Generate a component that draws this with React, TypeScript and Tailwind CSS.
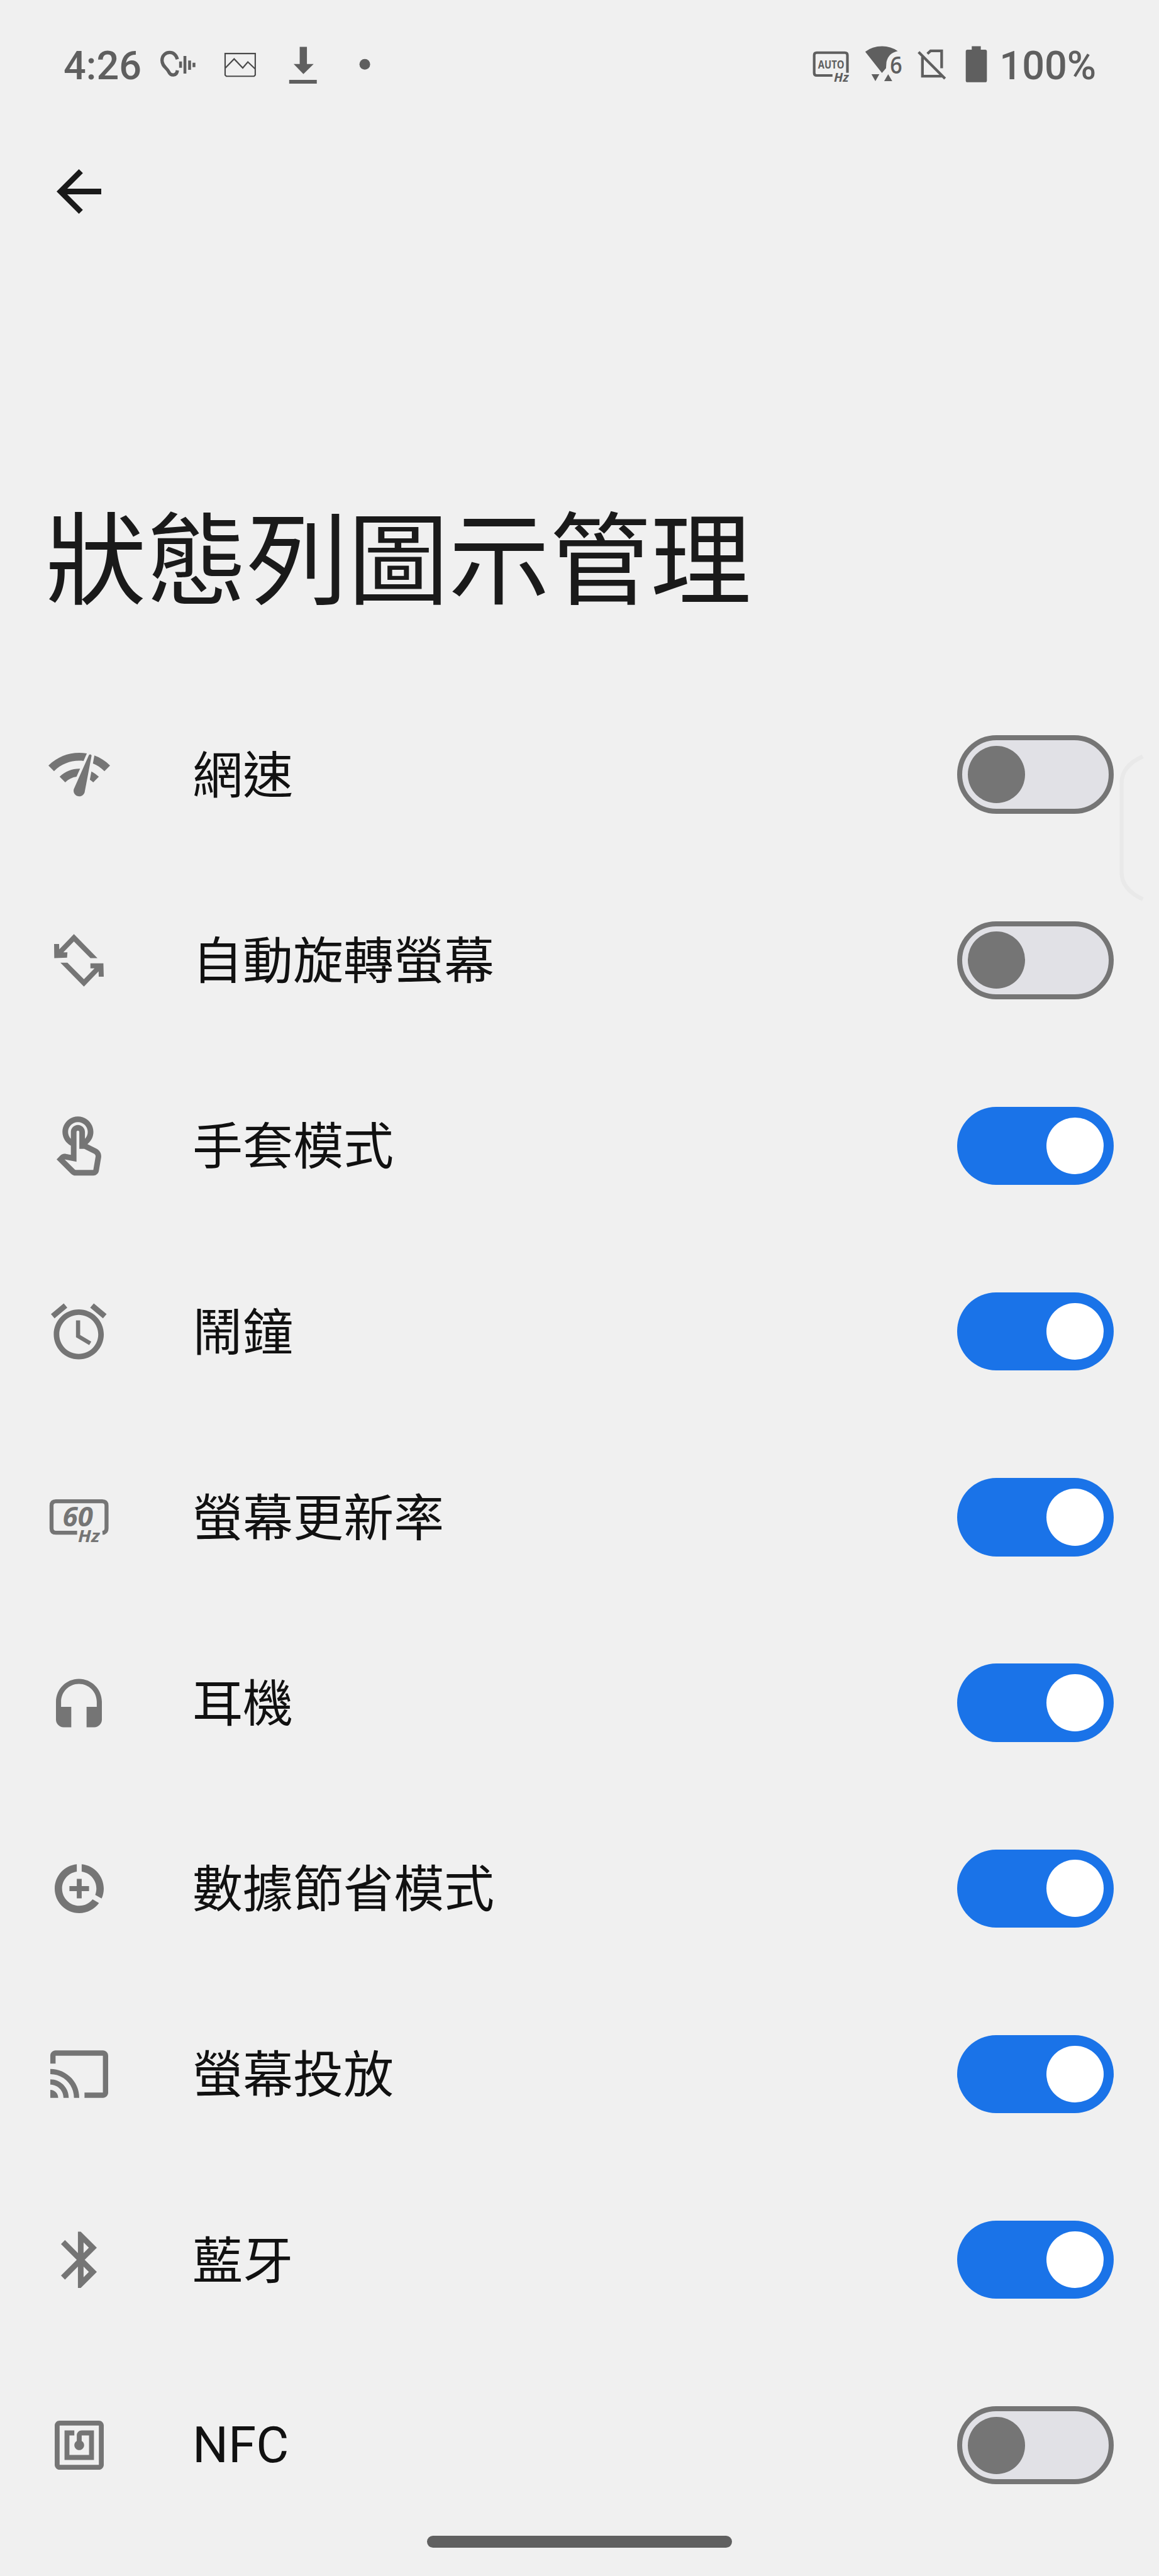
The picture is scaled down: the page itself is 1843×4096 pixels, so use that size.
import { useState } from 'react';
import type { ReactNode } from 'react';

interface IconProps {
  box: string;
  size: string;
  children: ReactNode;
}

interface StatusItem {
  id: string;
  label: string;
  enabled: boolean;
  icon: ReactNode;
}

function Icon({ box, size, children }: IconProps) {
  return (
    <svg viewBox={box} className={`${size} shrink-0 overflow-visible`} fill="currentColor">
      {children}
    </svg>
  );
}

const items: StatusItem[] = [
  {
    id: 'speed',
    label: '網速',
    enabled: false,
    icon: (
      <Icon box="1 4.4 22 15.6" size="w-[98px] h-[71px]">
        <path d="M15.9 5c-.17 0-.32.09-.41.23l-.07.15-5.18 11.65c-.16.29-.26.61-.26.96 0 1.11.9 2.01 2.01 2.01.96 0 1.77-.68 1.96-1.59l.01-.03L16.4 5.5c0-.28-.22-.5-.5-.5zM1 9l2 2c2.88-2.88 6.79-4.08 10.53-3.62l1.19-2.68C9.89 3.84 4.74 5.27 1 9zm20 2l2-2c-1.64-1.64-3.55-2.82-5.59-3.57l-.53 2.82c1.5.62 2.9 1.53 4.12 2.75zm-4 4l2-2c-.8-.8-1.7-1.42-2.66-1.89l-.55 2.92c.42.27.83.59 1.21.97zM5 13l2 2c1.13-1.13 2.56-1.79 4.03-2l1.28-2.88c-2.63-.08-5.3.87-7.31 2.88z" />
      </Icon>
    ),
  },
  {
    id: 'rotate',
    label: '自動旋轉螢幕',
    enabled: false,
    icon: (
      <Icon box="97 1132 268 284" size="w-[79px] h-[84px]">
        <path d="M204 1132L331 1262H293L204 1172L147 1231H169L167 1260L98 1262L97 1186H124L125 1215Z" />
        <path d="M258 1416L131 1287H169L258 1376L315 1317H293V1290H363L365 1362H338L337 1333Z" />
      </Icon>
    ),
  },
  {
    id: 'glove',
    label: '手套模式',
    enabled: true,
    icon: (
      <Icon box="4 1 15.86 21" size="w-[71px] h-[94.5px]">
        <path d="M18.19 12.44l-3.24-1.62c1.29-1 2.12-2.56 2.12-4.32 0-3.03-2.47-5.5-5.5-5.5s-5.5 2.47-5.5 5.5c0 2.13 1.22 3.98 3 4.89v3.26c-2.15-.46-2.02-.44-2.26-.44-.53 0-1.03.21-1.41.59L4 16.22l5.09 5.09c.43.44 1.03.69 1.65.69h6.3c.98 0 1.81-.7 1.97-1.67l.8-4.71c.22-1.3-.43-2.58-1.62-3.18zm-.35 2.85l-.8 4.71h-6.3c-.09 0-.17-.04-.24-.1l-3.68-3.68 4.25.89V6.5c0-.28.22-.5.5-.5s.5.22.5.5v6h1.76l3.46 1.73c.4.2.62.63.55 1.06zM8.07 6.5c0-1.93 1.57-3.5 3.5-3.5s3.5 1.57 3.5 3.5c0 .95-.38 1.81-1 2.44V6.5c0-1.38-1.12-2.5-2.5-2.5s-2.5 1.12-2.5 2.5v2.44c-.62-.63-1-1.49-1-2.44z" />
      </Icon>
    ),
  },
  {
    id: 'alarm',
    label: '鬧鐘',
    enabled: true,
    icon: (
      <Icon box="2 1.86 20 20.14" size="w-[88.5px] h-[90px]">
        <path d="M22 5.72l-4.6-3.86-1.29 1.53 4.6 3.86L22 5.72zM7.88 3.39L6.6 1.86 2 5.71l1.29 1.53 4.59-3.85zM12.5 8H11v6l4.75 2.85.75-1.23-4-2.37V8zM12 4c-4.97 0-9 4.03-9 9s4.02 9 9 9c4.97 0 9-4.03 9-9s-4.03-9-9-9zm0 16c-3.87 0-7-3.13-7-7s3.13-7 7-7 7 3.13 7 7-3.13 7-7 7z" />
      </Icon>
    ),
  },
  {
    id: 'refresh',
    label: '螢幕更新率',
    enabled: true,
    icon: (
      <Icon box="108 3294 132 112" size="w-[95px] h-[80.6px]">
        <path
          d="M170 3384.5H123Q113.5 3384.5 113.5 3375V3324.5Q113.5 3315 123 3315H225.5Q235 3315 235 3324.5V3375Q235 3384 226 3384.8"
          fill="none"
          stroke="currentColor"
          strokeWidth="8.8"
        />
        <text x="138" y="3371" textLength="67" lengthAdjust="spacingAndGlyphs" className="font-['Open_Sans'] text-[59px] font-bold italic">60</text>
        <text x="172" y="3404.5" textLength="48" lengthAdjust="spacingAndGlyphs" className="font-['Open_Sans'] text-[37px] font-bold italic">Hz</text>
      </Icon>
    ),
  },
  {
    id: 'headset',
    label: '耳機',
    enabled: true,
    icon: (
      <Icon box="3 1 18 19" size="w-[73px] h-[78px]">
        <path d="M12 1c-4.97 0-9 4.03-9 9v7c0 1.66 1.34 3 3 3h3v-8H5v-2c0-3.87 3.13-7 7-7s7 3.13 7 7v2h-4v8h3c1.66 0 3-1.34 3-3v-7c0-4.97-4.03-9-9-9z" />
      </Icon>
    ),
  },
  {
    id: 'datasaver',
    label: '數據節省模式',
    enabled: true,
    icon: (
      <Icon box="2 2 20 20" size="w-[78px] h-[78px]">
        <path d="M11 8v3H8v2h3v3h2v-3h3v-2h-3V8h-2zm2-5.95v3.03c3.39.49 6 3.39 6 6.92 0 .9-.18 1.75-.48 2.54l2.6 1.53c.56-1.24.88-2.62.88-4.07 0-5.18-3.95-9.45-9-9.95zM12 19c-3.87 0-7-3.13-7-7 0-3.53 2.61-6.43 6-6.92V2.05c-5.06.5-9 4.76-9 9.95 0 5.52 4.47 10 9.99 10 3.31 0 6.24-1.61 8.06-4.09l-2.6-1.53C16.17 17.98 14.21 19 12 19z" />
      </Icon>
    ),
  },
  {
    id: 'cast',
    label: '螢幕投放',
    enabled: true,
    icon: (
      <Icon box="1 3 22 18" size="w-[92px] h-[76px]">
        <path d="M21 3H3c-1.1 0-2 .9-2 2v3h2V5h18v14h-7v2h7c1.1 0 2-.9 2-2V5c0-1.1-.9-2-2-2zM1 18v3h3c0-1.66-1.34-3-3-3zm0-4v2c2.76 0 5 2.24 5 5h2c0-3.87-3.13-7-7-7zm0-4v2c4.97 0 9 4.03 9 9h2c0-6.08-4.93-11-11-11z" />
      </Icon>
    ),
  },
  {
    id: 'bluetooth',
    label: '藍牙',
    enabled: true,
    icon: (
      <Icon box="5 2 12.71 20" size="w-[57px] h-[90.5px]">
        <path d="M17.71 7.71L12 2h-1v7.59L6.41 5 5 6.41 10.59 12 5 17.59 6.41 19 11 14.41V22h1l5.71-5.71-4.3-4.29 4.3-4.29zM13 5.83l1.88 1.88L13 9.59V5.83zm1.88 10.46L13 18.17v-3.76l1.88 1.88z" />
      </Icon>
    ),
  },
  {
    id: 'nfc',
    label: 'NFC',
    enabled: false,
    icon: (
      <Icon box="2 2 20 20" size="w-[78px] h-[78px]">
        <path d="M20 2H4c-1.1 0-2 .9-2 2v16c0 1.1.9 2 2 2h16c1.1 0 2-.9 2-2V4c0-1.1-.9-2-2-2zm0 18H4V4h16v16zM18 6h-5c-1.1 0-2 .9-2 2v2.28c-.6.35-1 .98-1 1.72 0 1.1.9 2 2 2s2-.9 2-2c0-.74-.4-1.38-1-1.72V8h3v8H8V8h2V6H6v12h12V6z" />
      </Icon>
    ),
  },
];

function StatusBar() {
  return (
    <div className="flex h-[69px] items-center pl-[101px] font-['Roboto',sans-serif] text-[63px] leading-[69px] font-medium text-[#5f5f5f]">
      <span className="w-[153.4px] pt-[2px]">4:26</span>

      {/* sound amplifier */}
      <Icon box="40 18 245 288" size="w-[58.8px] h-[69px]">
        <g fill="none" stroke="currentColor">
          <path d="M157 123C148 94 130 78 106 78C76 78 55 101 55 130C55 171 86 178 100 207C108 224 117 228 131 227C147 226 155 215 157 197" strokeWidth="22" />
          <path d="M178 138V180M207 101V218M238 132V193M267 146V176" strokeWidth="19" />
        </g>
      </Icon>

      <Icon box="465 18 220 288" size="ml-[43.2px] w-[52.8px] h-[69px]">
        <path
          d="M473 85H673V228L665 236H481L473 228ZM473 183L533 121L590 181L624 141L673 188"
          fill="none"
          stroke="#4a4a4a"
          strokeWidth="9"
        />
      </Icon>

      <Icon box="636 96 66 96" size="ml-[48.7px] w-[47.5px] h-[69px]">
        <path d="M661.8 103.7H677.8V141.7H692.7L670 163.7L648.4 141.7H661.8ZM638.5 176.7H699.6V185.2H638.5Z" />
      </Icon>

      <Icon box="792 96 28 96" size="ml-[64.8px] w-[20.2px] h-[69px]">
        <circle cx="806" cy="142.3" r="11.8" />
      </Icon>

      <div className="ml-auto flex w-[552.9px] items-center">
        {/* auto refresh rate */}
        <Icon box="1792 96 86 96" size="w-[61.9px] h-[69px]">
          <path
            d="M1839 167H1804Q1798.5 167 1798.5 161.5V122Q1798.5 116.5 1804 116.5H1866.5Q1872 116.5 1872 122V161"
            fill="none"
            stroke="currentColor"
            strokeWidth="5.8"
          />
          <text x="1807" y="151.3" textLength="58" lengthAdjust="spacingAndGlyphs" className="font-['Open_Sans'] text-[25px] font-bold">AUTO</text>
          <text x="1842" y="180.5" textLength="33" lengthAdjust="spacingAndGlyphs" className="font-['Open_Sans'] text-[26px] font-bold italic">Hz</text>
        </Icon>

        {/* wifi 6 */}
        <Icon box="1908 96 86 96" size="ml-[21.6px] w-[61.9px] h-[69px]">
          <path d="M1910.5 114.5Q1926 102.3 1948 102.3Q1967 102.3 1982.5 113Q1962 117 1957.5 137L1956.5 151L1947.5 161.5Z" />
          <path d="M1924.3 164.3H1941.7L1933 179.5ZM1952.4 179.5H1970.3L1961.3 164.3Z" />
          <text x="1965.5" y="162.3" textLength="27" lengthAdjust="spacingAndGlyphs" className="font-['Open_Sans'] text-[53px] font-semibold">6</text>
        </Icon>

        {/* no sim */}
        <Icon box="2022 96 70 96" size="ml-[20.2px] w-[50.4px] h-[69px]">
          <path d="M2028.5 115L2087 174M2037 126V168.5H2082M2048 119L2055 112.5H2079.5V151" fill="none" stroke="currentColor" strokeWidth="6" />
        </Icon>

        <Icon box="2130 96 54 96" size="ml-[27.4px] w-[38.9px] h-[69px]">
          <path d="M2147 102.3H2167V110H2176.5Q2180.5 110 2180.5 114V178Q2180.5 182 2176.5 182H2137.7Q2133.7 182 2133.7 178V114Q2133.7 110 2137.7 110H2147Z" />
        </Icon>

        <span className="ml-[17px] pt-[2px]">100%</span>
      </div>
    </div>
  );
}

interface ToggleProps {
  checked: boolean;
  onChange: () => void;
}

function Toggle({ checked, onChange }: ToggleProps) {
  return (
    <button
      role="switch"
      aria-checked={checked}
      onClick={onChange}
      className={`${
        checked ? 'justify-end bg-[#1a73e8] px-[16.5px]' : 'border-[8.4px] border-[#757575] bg-[#e1e1e6] px-[8.8px]'
      } ml-auto flex h-[124.4px] w-[249px] items-center rounded-full`}
    >
      <span className={`${checked ? 'bg-white' : 'bg-[#757575]'} size-[90.6px] rounded-full`} />
    </button>
  );
}

export default function App() {
  const [settings, setSettings] = useState(items);

  const toggle = (id: string) => {
    setSettings(settings.map((item) => (item.id === id ? { ...item, enabled: !item.enabled } : item)));
  };

  return (
    <div className="relative flex h-[4096px] w-[1843px] flex-col overflow-hidden bg-[#f0f0f0] pt-[69px] font-['Roboto','Noto_Sans_CJK_TC',sans-serif]">
      <StatusBar />

      <button className="mt-[131px] ml-[90px] w-[71px] text-[#1a1a1a]" aria-label="返回">
        <Icon box="4 4 16 16" size="w-[71px] h-[71px]">
          <path d="M20 11H7.83l5.59-5.59L12 4l-8 8 8 8 1.41-1.41L7.83 13H20v-2z" />
        </Icon>
      </button>

      <h1 className="mt-[454px] ml-[72px] h-[200px] text-[160.4px] leading-[200px] text-[#1a1a1a]">狀態列圖示管理</h1>

      <ul className="mt-[90px]">
        {settings.map((item) => (
          <li key={item.id} className="flex h-[295.2px] items-center pr-[71.8px] pl-[75.5px]">
            <div className="flex w-[100px] justify-center text-[#757575]">{item.icon}</div>
            <span
              className={`${
                item.id === 'nfc' ? 'pt-0' : 'pt-[5px]'
              } ml-[130.5px] text-[80px] leading-[100px] text-[#111]`}
            >
              {item.label}
            </span>
            <Toggle checked={item.enabled} onChange={() => toggle(item.id)} />
          </li>
        ))}
      </ul>

      {/* edge panel handle */}
      <svg viewBox="2470 1660 64 334" className="absolute top-[1196px] left-[1777px] h-[240.5px] w-[46px]" fill="none">
        <path d="M2526 1669Q2479 1690 2479 1728V1925Q2479 1963 2526 1985" stroke="#e9e9e9" strokeWidth="9" />
      </svg>

      {/* gesture bar */}
      <div className="absolute bottom-[45px] left-[679.3px] h-[18.6px] w-[484.4px] rounded-full bg-[#606060]" />
    </div>
  );
}
